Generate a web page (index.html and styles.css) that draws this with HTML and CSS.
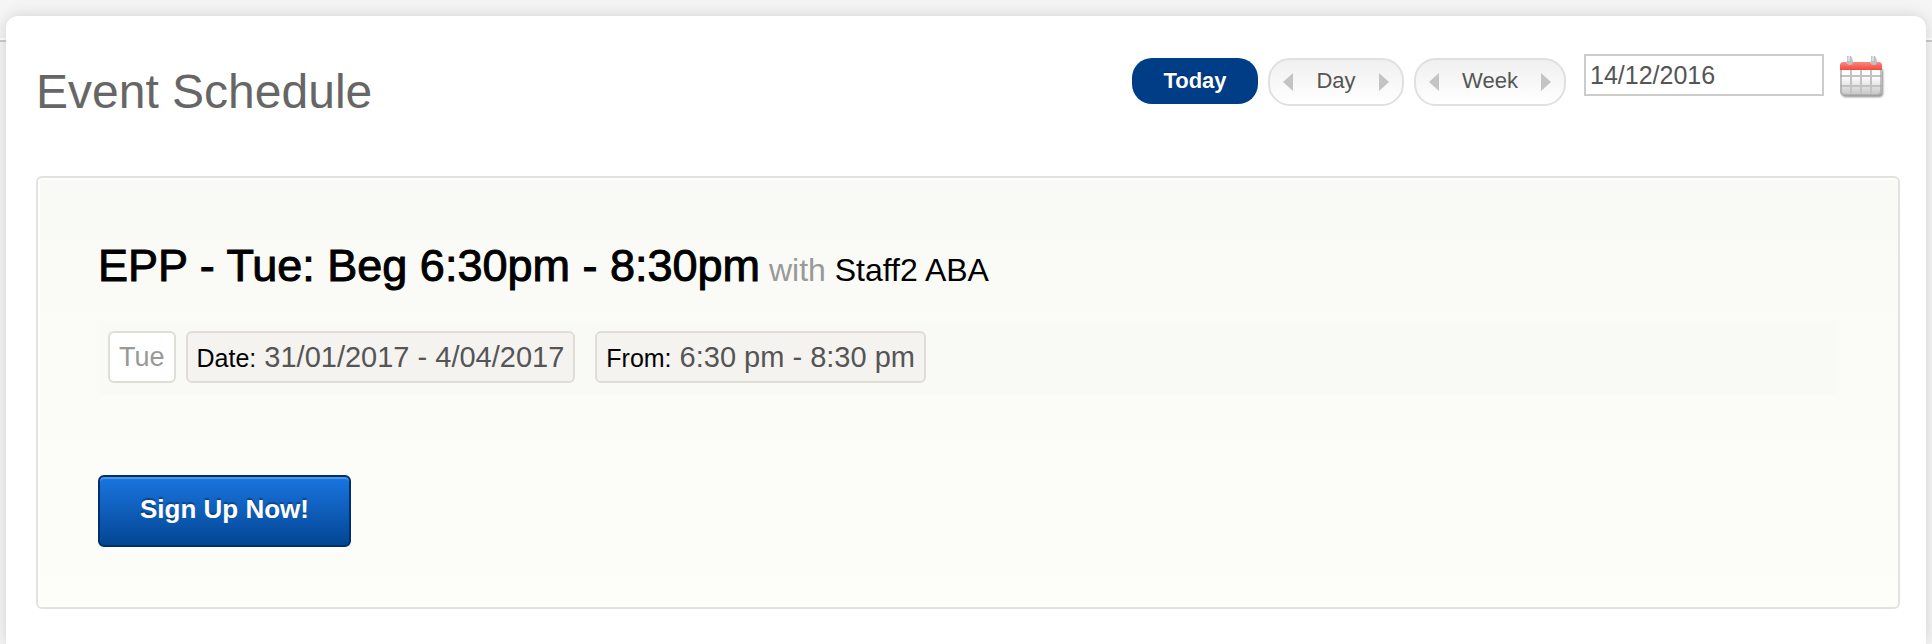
FILE: index.html
```html
<!DOCTYPE html>
<html lang="en">
<head>
  <meta charset="UTF-8">
  <meta name="viewport" content="width=device-width, initial-scale=1.0">
  <title>Event Schedule</title>
  <link rel="stylesheet" href="styles.css">
</head>
<body>
  <div class="wrapper">
    <div class="header">
      <h1>Event Schedule</h1>
      <form class="date-nav">
        <button type="button" class="today">Today</button>
        <div class="stepper day">
          <button type="button" class="arrow" aria-label="Previous day">
            <svg width="10" height="20" viewBox="0 0 10 20"><path d="M10 1v18L0 10z" fill="#c4c4c4"/></svg>
          </button>
          <button type="button" class="period">Day</button>
          <button type="button" class="arrow" aria-label="Next day">
            <svg width="10" height="20" viewBox="0 0 10 20"><path d="M0 1v18l10-9z" fill="#c4c4c4"/></svg>
          </button>
        </div>
        <div class="stepper week">
          <button type="button" class="arrow" aria-label="Previous week">
            <svg width="10" height="20" viewBox="0 0 10 20"><path d="M10 1v18L0 10z" fill="#c4c4c4"/></svg>
          </button>
          <button type="button" class="period">Week</button>
          <button type="button" class="arrow" aria-label="Next week">
            <svg width="10" height="20" viewBox="0 0 10 20"><path d="M0 1v18l10-9z" fill="#c4c4c4"/></svg>
          </button>
        </div>
        <input type="text" class="date-input" value="14/12/2016" aria-label="Date">
        <button type="button" class="calendar" aria-label="Open calendar">
          <svg width="46" height="46" viewBox="0 0 46 46">
            <defs>
              <linearGradient id="page" x1="0" y1="0" x2="0" y2="1">
                <stop offset="0.3" stop-color="#fff"/>
                <stop offset="1" stop-color="#c6c6c6"/>
              </linearGradient>
              <linearGradient id="red" x1="0" y1="0" x2="0" y2="1">
                <stop offset="0" stop-color="#f9887c"/>
                <stop offset="1" stop-color="#f4483f"/>
              </linearGradient>
              <filter id="soft" x="-10%" y="-10%" width="120%" height="125%">
                <feGaussianBlur stdDeviation="1"/>
              </filter>
            </defs>
            <rect x="2" y="12" width="41" height="29" rx="4" fill="#888" filter="url(#soft)"/>
            <path d="M0 13h42v22q0 4-4 4H4q-4 0-4-4z" fill="url(#page)"/>
            <path d="M11 14v25M21 14v25M31 14v25M0 20h42M0 30h42" fill="none" stroke="#c2c2c2" stroke-width="2"/>
            <path d="M1 14v21q0 4 4 4h32q4 0 4-4V14" fill="none" stroke="#a8a8a8" stroke-opacity="0.7" stroke-width="2"/>
            <path d="M0 14V9q0-3 4-3h34q4 0 4 3v5z" fill="url(#red)"/>
            <path d="M7 0h4q2 3 2 6 0 3-3 3T6 7q2-3 1-7zM31 0h4q2 3 2 6 0 3-3 3t-4-2q2-3 1-7z" fill="#c0c0c0"/>
            <path d="M9 0v5M33 0v5" stroke="#dedede" stroke-width="2"/>
          </svg>
        </button>
      </form>
    </div>
    <div class="event">
      <h2>EPP - Tue: Beg 6:30pm - 8:30pm<span class="staff"> <span class="with">with</span> Staff2 ABA</span></h2>
      <div class="details">
        <span class="tag weekday">Tue</span>
        <span class="tag"><span class="tag-label">Date:</span> 31/01/2017 - 4/04/2017</span>
        <span class="tag time"><span class="tag-label">From:</span> 6:30 pm - 8:30 pm</span>
      </div>
      <button type="button" class="signup">Sign Up Now!</button>
    </div>
  </div>
</body>
</html>
```
FILE: styles.css
```css
* {
  box-sizing: border-box;
}
body {
  margin: 0;
  min-height: 100vh;
  display: flex;
  flex-direction: column;
  padding: 16px 6px 0;
  font-family: "Liberation Sans", Arial, sans-serif;
  color: #555;
  background: linear-gradient(#f5f5f5 38px, #fff 38px, #fff 40px, #ccc 40px, #ccc 42px, #f5f5f5 42px);
}
button {
  font-family: inherit;
  cursor: pointer;
}
.wrapper {
  flex: 1;
  padding: 0 26px 34px 30px;
  background-color: #fff;
  border-radius: 12px 12px 0 0;
  box-shadow: 0 0 16px rgba(0, 0, 0, 0.15);
}
.header {
  display: flex;
  align-items: flex-start;
  justify-content: space-between;
  height: 160px;
}
h1 {
  margin: 0;
  padding-top: 48px;
  font-size: 48px;
  line-height: 56px;
  font-weight: normal;
  color: #666;
}
.date-nav {
  display: flex;
  align-items: flex-start;
  gap: 10px;
  padding: 38px 14px 0 0;
}
.today {
  width: 126px;
  height: 46px;
  margin-top: 4px;
  padding: 0;
  border: none;
  border-radius: 20px;
  background-color: #003d87;
  color: #fff;
  font-size: 22px;
  font-weight: bold;
  text-shadow: 0 -1px 1px rgba(0, 0, 0, 0.3);
}
.stepper {
  display: flex;
  align-items: center;
  justify-content: space-between;
  height: 48px;
  margin-top: 4px;
  padding: 0 13px;
  border: 2px solid #e0e0e0;
  border-radius: 22px;
  background: linear-gradient(#f0f0f0, #fff);
}
.day {
  width: 136px;
}
.week {
  width: 152px;
  margin-right: 8px;
}
.arrow {
  display: flex;
  padding: 0;
  border: none;
  background: none;
}
.period {
  padding: 0 0 2px;
  border: none;
  background: none;
  color: #555;
  font-size: 22px;
}
.date-input {
  width: 240px;
  height: 42px;
  padding: 0 4px;
  border: 2px solid #ccc;
  background-color: #fff;
  color: #555;
  font-family: inherit;
  font-size: 25px;
}
.calendar {
  display: flex;
  margin: 2px 0 0 6px;
  padding: 0;
  border: none;
  background: none;
}
.event {
  padding: 60px;
  border: 2px solid #e2e3df;
  border-radius: 6px;
  background: linear-gradient(#f9faf5, #fdfef9);
  box-shadow: inset 0 2px 0 #fff, inset 2px 0 0 #fff;
}
h2 {
  margin: 0;
  font-size: 45px;
  line-height: 56px;
  font-weight: normal;
  color: #000;
  -webkit-text-stroke: 1px #000;
}
.staff {
  font-size: 32px;
  -webkit-text-stroke: 0;
}
.with {
  color: #999;
}
.details {
  display: flex;
  gap: 10px;
  margin: 23px 0 80px;
  padding: 10px 10px 12px;
  background-color: #f9faf6;
}
.tag {
  height: 52px;
  padding: 0 9px;
  border: 2px solid #e0ddd7;
  border-radius: 6px;
  background-color: #f5f3f0;
  font-size: 29px;
  line-height: 48px;
}
.weekday {
  background-color: #fff;
  color: #999;
  font-size: 27px;
}
.time {
  margin-left: 10px;
}
.tag-label {
  color: #000;
  font-size: 25px;
}
.signup {
  display: block;
  height: 72px;
  padding: 0 40px 4px;
  border: 2px solid #00306b;
  border-radius: 6px;
  background: linear-gradient(#1a75e0, #034694);
  box-shadow: inset 0 2px 0 #4c94e8;
  color: #fff;
  font-size: 26px;
  font-weight: bold;
  text-shadow: 0 -2px 1px rgba(0, 0, 0, 0.3);
}
```
